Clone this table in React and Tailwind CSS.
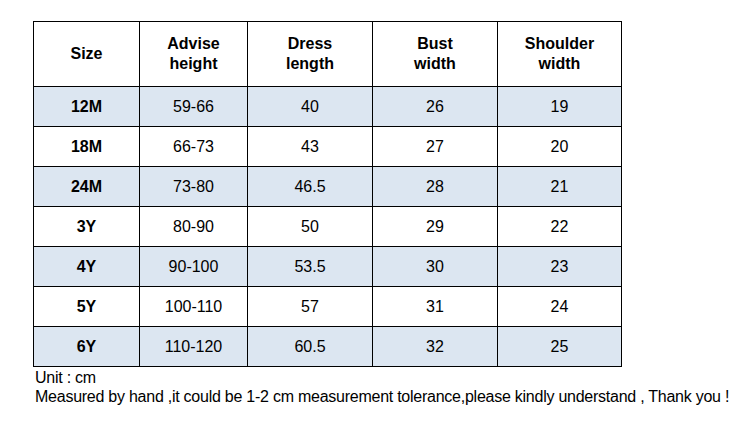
export default function App() {
  const rows = [
    ["12M", "59-66", "40", "26", "19", true],
    ["18M", "66-73", "43", "27", "20", false],
    ["24M", "73-80", "46.5", "28", "21", true],
    ["3Y", "80-90", "50", "29", "22", false],
    ["4Y", "90-100", "53.5", "30", "23", true],
    ["5Y", "100-110", "57", "31", "24", false],
    ["6Y", "110-120", "60.5", "32", "25", true],
  ];
  const headers = ["Size", "Advise\nheight", "Dress\nlength", "Bust\nwidth", "Shoulder\nwidth"];
  const widths = ["w-[106px]", "w-[108px]", "w-[125px]", "w-[125px]", "w-[124px]"];
  return (
    <div className="w-[747px] h-[422px] bg-white text-black font-['Liberation_Sans',Arial,sans-serif] pt-[21px] pl-[33px]">
      <table className="border-collapse border border-black leading-[20px] w-[589px] table-fixed">
        <thead>
          <tr className="h-[65px]">
            {headers.map((h, i) => (
              <th key={i} className={`${widths[i]} border border-black font-bold text-[16px] text-center whitespace-pre-line p-0`}>
                {h}
              </th>
            ))}
          </tr>
        </thead>
        <tbody>
          {rows.map((r, i) => (
            <tr key={i} className={`h-[40px] ${r[5] ? "bg-[#dce6f1]" : "bg-white"}`}>
              <td className="border border-black text-center font-bold text-[16px] p-0">{r[0]}</td>
              <td className="border border-black text-center text-[16px] p-0">{r[1]}</td>
              <td className="border border-black text-center text-[16px] p-0">{r[2]}</td>
              <td className="border border-black text-center text-[16px] p-0">{r[3]}</td>
              <td className="border border-black text-center text-[16px] p-0">{r[4]}</td>
            </tr>
          ))}
        </tbody>
      </table>
      <div className="pl-[2px] pt-[1px] text-[16px] leading-[19px] tracking-[-0.25px]">
        <div>Unit : cm</div>
        <div>Measured by hand ,it could be 1-2 cm measurement tolerance,please kindly understand , Thank you !</div>
      </div>
    </div>
  );
}
